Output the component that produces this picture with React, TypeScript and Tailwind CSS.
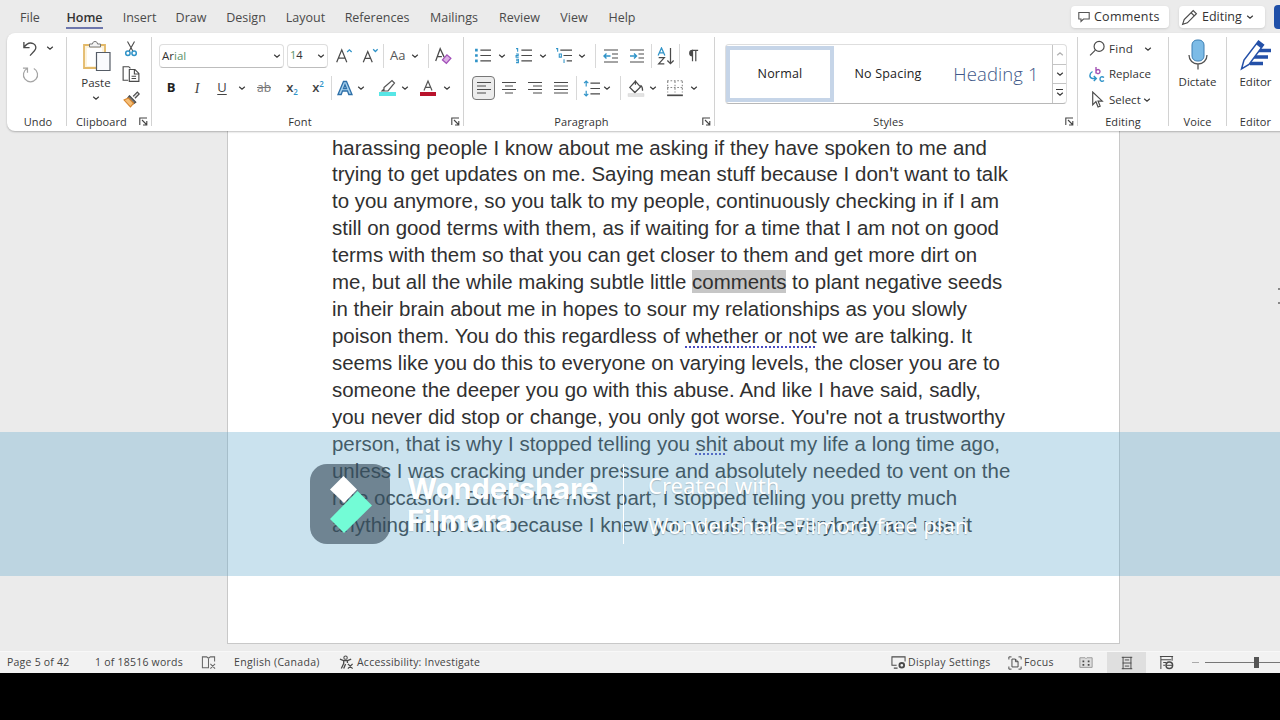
import type { ReactNode } from 'react';
import clsx from 'clsx';

/**
 * Word processor window: tab strip, ribbon, document page, status bar
 * and the video editor watermark that lies over the page.
 */

const tabs = [
    { name: 'File', width: 'w-[20px] mr-[6px]' },
    { name: 'Home', width: 'w-[37px]', active: true },
    { name: 'Insert', width: 'w-[33px]' },
    { name: 'Draw', width: 'w-[30px]' },
    { name: 'Design', width: 'w-[40px]' },
    { name: 'Layout', width: 'w-[39px]' },
    { name: 'References', width: 'w-[64px]' },
    { name: 'Mailings', width: 'w-[50px]' },
    { name: 'Review', width: 'w-[41px]' },
    { name: 'View', width: 'w-[28px]' },
    { name: 'Help', width: 'w-[28px]' },
];

const Spell = ({ children }: { children: string }) => (
    <span className="underline decoration-dotted decoration-[#4a4ac0] decoration-[2px] underline-offset-[3px]">{children}</span>
);

// One entry per line of the page, with the width the line takes
const lines: { width: string; text: ReactNode }[] = [
    { width: 'w-[655px]', text: 'harassing people I know about me asking if they have spoken to me and' },
    { width: 'w-[676px]', text: "trying to get updates on me. Saying mean stuff because I don't want to talk" },
    { width: 'w-[667px]', text: 'to you anymore, so you talk to my people, continuously checking in if I am' },
    { width: 'w-[667px]', text: 'still on good terms with them, as if waiting for a time that I am not on good' },
    { width: 'w-[645px]', text: 'terms with them so that you can get closer to them and get more dirt on' },
    { width: 'w-[670px]', text: <>me, but all the while making subtle little <span className="bg-[#c6c6c6]">comments</span> to plant negative seeds</> },
    { width: 'w-[635px]', text: 'in their brain about me in hopes to sour my relationships as you slowly' },
    { width: 'w-[640px]', text: <>poison them. You do this regardless of <Spell>whether or not</Spell> we are talking. It</> },
    { width: 'w-[668px]', text: 'seems like you do this to everyone on varying levels, the closer you are to' },
    { width: 'w-[649px]', text: 'someone the deeper you go with this abuse. And like I have said, sadly,' },
    { width: 'w-[673px]', text: "you never did stop or change, you only got worse. You're not a trustworthy" },
    { width: 'w-[668px]', text: <>person, that is why I stopped telling you <Spell>shit</Spell> about my life a long time ago,</> },
    { width: 'w-[678px]', text: 'unless I was cracking under pressure and absolutely needed to vent on the' },
    { width: 'w-[625px]', text: 'rare occasion. But for the most part, I stopped telling you pretty much' },
    { width: 'w-[640px]', text: 'anything important because I knew you would tell everybody and use it' },
];

const Chevron = ({ className }: { className?: string }) => (
    <svg className={clsx('h-2 w-2 shrink-0', className)} viewBox="0 0 8 8" fill="none" stroke="#3a3a3a" strokeWidth="1.2">
        <path d="M1.2 2.8 4 5.2l2.8-2.4" />
    </svg>
);

const Launcher = () => (
    <svg className="mr-[3px] h-[9px] w-[9px] shrink-0" viewBox="0 0 9 9" fill="none" stroke="#444" strokeWidth="1.1">
        <path d="M.8 8V1H8M3 3l4.5 4.5M7.8 4v4H4" />
    </svg>
);

const Sep = ({ className }: { className?: string }) => (
    <div className={clsx('h-6 w-px shrink-0 bg-[#d8d8d8]', className)} />
);

const Divider = () => <div className="mt-1 h-[89px] w-px shrink-0 bg-[#d2d2d2]" />;

// Fixed width slot that centres one tool
const Cell = ({ className, children }: { className: string; children: ReactNode }) => (
    <div className={clsx('flex shrink-0 items-center justify-center', className)}>{children}</div>
);

interface GroupProps {
    label: string;
    width: string;
    launcher?: boolean;
    children: ReactNode;
}

const Group = ({ label, width, launcher, children }: GroupProps) => (
    <section className={clsx('flex h-full shrink-0 flex-col', width)}>
        <div className="h-[79px]">{children}</div>
        <div className="flex h-[18px] items-center">
            <span className={clsx('flex-1 text-center text-[11px] leading-none tracking-[0.1px] whitespace-nowrap', launcher && '-ml-[3px]')}>{label}</span>
            {launcher && <Launcher />}
        </div>
    </section>
);

const Svg = ({ children, className = 'h-4 w-4' }: { children: ReactNode; className?: string }) => (
    <svg className={clsx('shrink-0', className)} viewBox="0 0 16 16" fill="none" stroke="#4a4a4a" strokeWidth="1.1">
        {children}
    </svg>
);

const UndoGroup = () => (
    <Group label="Undo" width="w-[59px] pl-[3px]">
        <div className="flex h-[30px] items-center pl-[12px]">
            <svg className="h-[17px] w-[17px]" viewBox="0 0 18 18" fill="none" stroke="#4a4a4a" strokeWidth="1.4">
                <path d="M2 2v6h6M2.3 7.6C5 3.6 9 2.400 12.200 4c3 1.600 3.200 5 1 7.400L8.500 16.500" />
            </svg>
            <Chevron className="ml-[7px]" />
        </div>
        <div className="flex h-[22px] items-center pl-[12px]">
            <svg className="h-[17px] w-[17px]" viewBox="0 0 18 18" fill="none" stroke="#a4a4a4" strokeWidth="1.300">
                <path d="M12.500 2.600A7.500 7.500 0 1 1 5.500 2.600M1 2.200h4.800v5" />
            </svg>
        </div>
    </Group>
);

const ClipboardGroup = () => (
    <Group label="Clipboard" width="w-[84px]" launcher>
        <div className="flex">
            <div className="ml-[13px] flex w-[32px] flex-col items-center">
                <svg className="mt-[7px] ml-[2px] h-[32px] w-[28px]" viewBox="0 0 28 32" fill="none">
                    <path d="M1 5h21v23H1z" fill="#fdf3dc" stroke="#e3b968" strokeWidth="1.800" />
                    <path d="M4 8h15v18H4z" fill="#fff" />
                    <path d="M6.500 7V4h3C9.500 2.500 10.500 1.500 12 1.500S14.500 2.500 14.500 4h3v3z" fill="#f4f4f4" stroke="#777" />
                    <path d="M13.500 12.500h13.500v18H13.500z" fill="#fafbfd" stroke="#555c66" strokeWidth="1.200" />
                </svg>
                <span className="mt-[3px] text-[11.500px] leading-[15px]">Paste</span>
                <Chevron className="mt-[4px]" />
            </div>
            <div className="ml-[10px] flex flex-col items-center">
                <Svg className="mt-[7px] h-[17px] w-[16px]">
                    <path d="M4.500 1l5.300 9.500M11.500 1 6.200 10.500" />
                    <circle cx="4.900" cy="12.800" r="2.200" stroke="#2f93c8" strokeWidth="1.500" />
                    <circle cx="11.100" cy="12.800" r="2.200" stroke="#2f93c8" strokeWidth="1.500" />
                </Svg>
                <Svg className="mt-[8px] h-[18px] w-[18px]">
                    <path d="M5.500 13.500H1V1.500h5l1.500 1.500M6.500 4h5L15 7.500v7H6.500zM11 4v4h4M8.500 10h4M8.500 12h4" strokeWidth="1" />
                </Svg>
                <Svg className="mt-[8px] h-[17px] w-[17px]">
                    <path d="M9.500 5 13.500 1l1.800 1.800-4 4" fill="#ddd" />
                    <path d="M6 4.500l6 6-2 1.500-5.500-5.500z" fill="#777" />
                    <path d="M5 6.500 1 8.500l6 6.500 3-3.500z" fill="#f6bf77" stroke="#d8862f" />
                </Svg>
            </div>
        </div>
    </Group>
);

const FontGroup = () => (
    <Group label="Font" width="w-[311px]" launcher>
        <div className="h-[11px]" />
        <div className="flex h-[23px] items-center pl-[7px]">
            <div className="flex h-[24px] w-[125px] shrink-0 items-center justify-between rounded border border-[#dedede] border-b-[#bdbdbd] pr-[2px] pl-[2px] text-[11.500px]">
                <span>Ar<span className="text-[#5d9468]">ial</span></span>
                <Chevron />
            </div>
            <div className="ml-[3px] flex h-[24px] w-[41px] shrink-0 items-center justify-between rounded border border-[#dedede] border-b-[#bdbdbd] pr-[2px] pl-[2px] text-[11px]">
                <span><span className="text-[#5d9468]">1</span>4</span>
                <Chevron />
            </div>
            <Cell className="ml-[6px] w-[20px]">
                <Svg className="h-[18px] w-[18px]">
                    <path d="M1.500 13.500 6 2.500l4.500 11M3 9.800h6" />
                    <path d="M10.800 4.500l2-2 2 2" stroke="#2f93c8" />
                </Svg>
            </Cell>
            <Cell className="ml-[6px] w-[20px]">
                <Svg className="h-[18px] w-[18px]">
                    <path d="M2 13.500 6 4l4 9.500M3.400 10.200h5.200" />
                    <path d="M10.800 2l2 2 2-2" stroke="#2f93c8" />
                </Svg>
            </Cell>
            <Sep className="ml-[3px]" />
            <span className="ml-[6px] w-[17px] text-[13px] whitespace-nowrap text-[#555]">Aa</span>
            <Chevron className="ml-[4px]" />
            <Sep className="ml-[9px]" />
            <Svg className="ml-[5px] h-[18px] w-[18px]">
                <path d="M1.500 12.500 5.500 1.500 9 9M3 8.500h4" />
                <path d="M7.500 11.500 11.500 7l3.500 3-4 4.500z" fill="#dcb0e6" stroke="#a14fb8" />
            </Svg>
        </div>
        <div className="mt-[9px] flex h-[24px] items-center pl-[7px] text-[13px] text-[#444]">
            <Cell className="w-[24px] font-bold text-[#222]">B</Cell>
            <Cell className="w-[28px] font-['Liberation_Serif'] text-[14px] italic">I</Cell>
            <Cell className="w-[22px] underline underline-offset-2">U</Cell>
            <Cell className="w-[18px]"><Chevron /></Cell>
            <Cell className="w-[26px] text-[12px] text-[#777] line-through">ab</Cell>
            <Cell className="w-[30px] font-semibold">x<span className="mt-[7px] text-[8px] text-[#2f93c8]">2</span></Cell>
            <Cell className="w-[22px] font-semibold">x<span className="mb-[8px] text-[8px] text-[#2f93c8]">2</span></Cell>
            <Cell className="w-[4px]"><Sep /></Cell>
            <Cell className="w-[24px]">
                <Svg className="h-[16px] w-[16px]">
                    <path d="M1 14.500 6.500 1.500h3L15 14.500h-3.200l-1.300-3.500h-5L4.200 14.500zM6.500 8.500h3L8 4.800z" fill="#a9d2ee" stroke="#2d6fa8" strokeWidth="1.300" />
                </Svg>
            </Cell>
            <Cell className="w-[8px]"><Chevron /></Cell>
            <Cell className="ml-[10px] w-[26px]">
                <svg className="h-[18px] w-[18px]" viewBox="0 0 18 18" fill="none" stroke="#555" strokeWidth="1.200">
                    <path d="M5 8.500 13 1.500l2.500 2.500L9 12H5zM5 10 3 12h4" />
                    <path d="M0 13h17v4H0z" fill="#57e6e6" stroke="none" />
                </svg>
            </Cell>
            <Cell className="w-[8px]"><Chevron /></Cell>
            <Cell className="ml-[5px] w-[28px]">
                <svg className="h-[18px] w-[18px]" viewBox="0 0 18 18" fill="none" stroke="#555" strokeWidth="1.200">
                    <path d="M5 11.500 9 2l4 9.500M6.400 8.300h5.200" />
                    <path d="M1 13h16v4H1z" fill="#b9132c" stroke="none" />
                </svg>
            </Cell>
            <Cell className="w-[10px]"><Chevron /></Cell>
        </div>
    </Group>
);

const AlignIcon = ({ d }: { d: string }) => (
    <Svg>
        <path d={d} strokeWidth="1.200" />
    </Svg>
);

const ParagraphGroup = () => (
    <Group label="Paragraph" width="w-[250px]" launcher>
        <div className="h-[11px]" />
        <div className="flex h-[23px] items-center pl-[10px]">
            <Svg className="h-[17px] w-[17px]">
                <path d="M6 3h10M6 8h10M6 13h10" />
                <path d="M1 3h2.500M1 8h2.500M1 13h2.500" stroke="#2f93c8" strokeWidth="2.500" />
            </Svg>
            <Chevron className="ml-[7px]" />
            <Svg className="ml-[9px] h-[17px] w-[17px]">
                <path d="M6 3h10M6 8h10M6 13h10" />
                <path d="M1 1.500h1.500v3M1 6.500h2v1.500H1v1.500h2.500M1 11.500h2.200v3.200H1M1 13h2" stroke="#2f93c8" strokeWidth="1" />
            </Svg>
            <Chevron className="ml-[7px]" />
            <Svg className="ml-[8px] h-[17px] w-[17px]">
                <path d="M5 3h11M8 8h8M11 13h5" />
                <path d="M1 1.500h1.500v3M4 6.500h2V9.500H4zM8.500 11.500v3.500" stroke="#2f93c8" strokeWidth="1" />
            </Svg>
            <Chevron className="ml-[6px]" />
            <Sep className="ml-[9px]" />
            <Svg className="ml-[7px] h-4 w-4">
                <path d="M1 2h14M9 6h6M9 10h6M1 14h14" />
                <path d="M7.500 8H1M3.500 5.500 1 8l2.500 2.500" stroke="#2f93c8" strokeWidth="1.400" />
            </Svg>
            <Svg className="ml-[10px] h-4 w-4">
                <path d="M1 2h14M9.500 6H15M9.500 10H15M1 14h14" />
                <path d="M1 8h6.500M5 5.500 7.500 8 5 10.500" stroke="#2f93c8" strokeWidth="1.400" />
            </Svg>
            <Sep className="ml-[6px]" />
            <Svg className="ml-[5px] h-[18px] w-[18px]">
                <path d="M1 7.500 4 .8l3 6.700M2 5.300h4" stroke="#2f93c8" />
                <path d="M1.500 9.500h5L1.500 15h5M12 .8v14M9.200 12 12 14.800l2.800-2.800" />
            </Svg>
            <Sep className="ml-[4px]" />
            <Svg className="ml-[5px] h-[15px] w-[15px]">
                <path d="M8 2.500a3 3 0 0 0 0 6z" fill="#4a4a4a" />
                <path d="M8 14V2.500h6M11.500 2.500V14" strokeWidth="1.300" />
            </Svg>
        </div>
        <div className="mt-[9px] flex h-[24px] items-center pl-[8px]">
            <div className="flex h-[24px] w-[23px] shrink-0 items-center justify-center rounded-[4px] border border-[#777] bg-[#ececec]">
                <AlignIcon d="M1 2.500h14M1 6h9M1 9.500h14M1 13h9" />
            </div>
            <Cell className="w-[28px]"><AlignIcon d="M1 2.500h14M4 6h8M1 9.500h14M4 13h8" /></Cell>
            <Cell className="w-[24px]"><AlignIcon d="M1 2.500h14M6 6h9M1 9.500h14M6 13h9" /></Cell>
            <Cell className="w-[28px]"><AlignIcon d="M1 2.500h14M1 6h14M1 9.500h14M1 13h14" /></Cell>
            <Sep className="ml-px" />
            <Svg className="ml-[6px] h-[17px] w-[17px]">
                <path d="M7 3h9M7 8h9M7 13h9" />
                <path d="M3 1v5M1 3l2-2 2 2M3 10v5M1 13l2 2 2-2" stroke="#2f93c8" />
            </Svg>
            <Chevron className="ml-[3px]" />
            <Sep className="ml-[9px]" />
            <Svg className="ml-[6px] h-[18px] w-[18px]">
                <path d="M7.500 2 2.500 7.500 7 12l5-5zM7.500 1v4M12 5.500c1.500 1 2 2.500 1.800 5" />
                <path d="M1 13h14v2.500H1z" fill="#e3e3e3" stroke="#d2d2d2" strokeWidth=".5" />
            </Svg>
            <Chevron className="ml-[4px]" />
            <Svg className="ml-[9px] h-[18px] w-[18px]">
                <path d="M1 1.500h14M1.500 2v10M14.500 2v10M8 2v10M1 7.500h14" stroke="#888" strokeDasharray="1.500 1.500" strokeWidth="1" />
                <path d="M1 14.500h14" strokeWidth="1.500" />
            </Svg>
            <Chevron className="ml-[6px]" />
        </div>
    </Group>
);

const StylesGroup = () => (
    <Group label="Styles" width="w-[362px]" launcher>
        <div className="h-[11px]" />
        <div className="ml-[10px] flex h-[60px] w-[342px] rounded border border-[#dedede] border-b-[#b8b8b8]">
            <div className="mt-px flex h-[56px] w-[108px] shrink-0 items-center justify-center border-4 border-[#c6d5e8] text-[12.500px] tracking-[0.200px] text-[#222]">Normal</div>
            <div className="flex w-[108px] shrink-0 items-center justify-center text-[12.500px] tracking-[0.200px] whitespace-nowrap text-[#222]">No Spacing</div>
            <div className="flex w-[110px] shrink-0 items-center justify-center pr-[2px] text-[18.500px] font-light tracking-[0.100px] whitespace-nowrap text-[#41598a]">Heading 1</div>
            <div className="flex flex-1 flex-col divide-y divide-[#c4c4c4] border-l border-[#c4c4c4]">
                <div className="flex flex-1 items-center justify-center"><Chevron className="rotate-180 opacity-40" /></div>
                <div className="flex flex-1 items-center justify-center"><Chevron /></div>
                <div className="flex flex-1 flex-col items-center justify-center">
                    <div className="h-px w-[7px] bg-[#3a3a3a]" />
                    <Chevron />
                </div>
            </div>
        </div>
    </Group>
);

const EditingGroup = () => (
    <Group label="Editing" width="w-[90px]">
        <div className="flex flex-col pt-[3px] pl-[11px] text-[11.500px] text-[#333]">
            <div className="flex h-[25px] items-center">
                <Svg className="h-[17px] w-[17px]">
                    <circle cx="9.500" cy="6" r="4.700" />
                    <path d="M6 9.500 1 14.500" />
                </Svg>
                <span className="ml-[3px] w-[35px] tracking-[0.300px]">Find</span>
                <Chevron />
            </div>
            <div className="flex h-[26px] items-center">
                <svg className="h-[17px] w-[17px]" viewBox="0 0 17 17" fill="none" strokeWidth="1.400">
                    <path d="M7 1v6.500M7 5.500a2 2 0 1 1 0 .2" stroke="#a453b5" />
                    <path d="M15 11.500c-2-1.600-4-.5-4 1.500s2 3 4 1.500M3.500 5.500C0 7.500 0 12 3.500 12.500H7M4.800 10 7.300 12.500 4.800 15" stroke="#2f93c8" />
                </svg>
                <span className="ml-[3px]">Replace</span>
            </div>
            <div className="flex h-[25px] items-center">
                <Svg className="h-[17px] w-[17px]">
                    <path d="M3.500 1v12l3-3 2 5 2-.8-2-4.700h4z" />
                </Svg>
                <span className="ml-[3px] w-[34px]">Select</span>
                <Chevron />
            </div>
        </div>
    </Group>
);

const VoiceGroup = () => (
    <Group label="Voice" width="w-[57px]">
        <div className="flex flex-col items-center pt-[6px]">
            <svg className="h-[32px] w-[22px]" viewBox="0 0 22 32" fill="none">
                <rect x="5" y="1" width="12" height="21" rx="5" fill="#7cbbe6" stroke="#3c7fb4" />
                <path d="M2 16c0 5.500 4 9 9 9s9-3.500 9-9M11 25v5.500" stroke="#555" strokeWidth="1.300" />
            </svg>
            <span className="mt-[3px] text-[11.500px] leading-[15px]">Dictate</span>
        </div>
    </Group>
);

const EditorGroup = () => (
    <Group label="Editor" width="w-[57px]">
        <div className="flex flex-col items-center pt-[6px]">
            <svg className="h-[32px] w-[32px]" viewBox="0 0 32 32" fill="none">
                <path d="M17 11.500h14M14 18h14M10 24.500h13" stroke="#2450a8" strokeWidth="3.500" />
                <path d="M1.500 30 4 21 18.500 2l5 4L9 25.500z" fill="#fff" stroke="#2450a8" strokeWidth="1.500" />
                <path d="M16 5.300 18.500 2l5 4-2.500 3.300z" fill="#2450a8" />
            </svg>
            <span className="mt-[3px] text-[11.500px] leading-[15px]">Editor</span>
        </div>
    </Group>
);

const TabStrip = () => (
    <header className="flex h-[33px] shrink-0 items-start">
        <nav className="flex w-[1071px] shrink-0 gap-[20px] pt-[9px] pl-[20px] text-[12.500px] text-[#4a4a4a]">
            {tabs.map((tab) => (
                <div key={tab.name} className={clsx('flex shrink-0 flex-col items-center whitespace-nowrap', tab.width)}>
                    <span className={clsx('leading-[18px]', tab.active && 'font-semibold text-[#333]')}>{tab.name}</span>
                    {tab.active && <div className="h-[2px] w-full bg-[#6d76ac]" />}
                </div>
            ))}
        </nav>
        <div className="mt-[6px] flex h-[22px] w-[98px] shrink-0 items-center rounded bg-white pl-[7px] text-[12.500px] font-medium tracking-[0.250px] text-[#333] shadow-sm">
            <svg className="mr-[4px] h-[12px] w-[12px]" viewBox="0 0 12 12" fill="none" stroke="#555" strokeWidth="1.100">
                <path d="M.8 1.500h10.400v6.500H5.500L3 10.500V8H.8z" />
            </svg>
            Comments
        </div>
        <div className="mt-[6px] ml-[10px] flex h-[22px] w-[86px] shrink-0 items-center rounded bg-white pl-[2px] text-[12.500px] font-medium text-[#333] shadow-sm">
            <Svg className="mr-[4px] h-[17px] w-[17px]">
                <path d="M1.500 14.500 3 10 11.500 1.500l3 3L6 13zM9.500 3.500l3 3" />
            </Svg>
            Editing
            <Chevron className="ml-[4px]" />
        </div>
        <div className="mt-[5px] ml-[9px] h-[24px] w-[20px] shrink-0 rounded bg-[#1f4fa8]" />
    </header>
);

const Ribbon = () => (
    <div className="relative z-10 ml-[7px] flex h-[98px] w-[1300px] shrink-0 rounded-lg bg-white text-[#333] shadow-[0_1px_2px_rgba(0,0,0,0.25)]">
        <UndoGroup />
        <Divider />
        <ClipboardGroup />
        <Divider />
        <FontGroup />
        <Divider />
        <ParagraphGroup />
        <Divider />
        <StylesGroup />
        <Divider />
        <EditingGroup />
        <Divider />
        <VoiceGroup />
        <Divider />
        <EditorGroup />
    </div>
);

const DocumentArea = () => (
    <main className="flex h-[520px] shrink-0 justify-between">
        <article className="ml-[227px] h-[513px] w-[893px] shrink-0 border border-t-0 border-[#c8c8c8] bg-white pt-[3.500px] pl-[104px] font-['Liberation_Sans',sans-serif] text-[20.450px] leading-[26.950px] text-[#303030]">
            {lines.map((line, i) => (
                <p key={i} className={clsx('whitespace-nowrap [text-align-last:justify]', line.width)}>{line.text}</p>
            ))}
        </article>
        {/* edge of the text cursor, half out of the window */}
        <div className="mt-[157px] h-[16px] w-[2px] border-y-2 border-[#888]" />
    </main>
);

const StatusBar = () => (
    <footer className="flex h-[22px] shrink-0 items-center border-t border-[#f8f8f8] bg-[#f2f2f2] pl-[7px] text-[10.500px] tracking-[0.230px] whitespace-nowrap text-[#444]">
        <span className="w-[88px] shrink-0">Page 5 of 42</span>
        <span className="w-[106px] shrink-0">1 of 18516 words</span>
        <Svg className="h-[15px] w-[15px]">
            <path d="M8 3v10.500H1.500V2H6l2 1.500L10 2h4.500v5M10 9.500l5 5M15 9.500l-5 5" stroke="#666" />
        </Svg>
        <span className="ml-[18px] w-[105px] shrink-0 tracking-[0.320px]">English (Canada)</span>
        <Svg className="h-[15px] w-[15px]">
            <circle cx="7" cy="2.800" r="1.800" />
            <path d="M1 4.500 5 6v3l-2.500 5.500M13 4.500 9 6v2.500M5 6h4M7 9.500l-2 5M9.500 9.500l5 5M14.500 9.500l-5 5" strokeWidth="1.400" />
        </Svg>
        <span className="ml-[3px] w-[534px] shrink-0">Accessibility: Investigate</span>
        <Svg className="h-[15px] w-[15px]">
            <path d="M6 11H1V2h14v5M3 14h4" />
            <circle cx="11.500" cy="11" r="2.500" strokeWidth="2" />
        </Svg>
        <span className="ml-[2px] w-[100px] shrink-0 tracking-[0.350px]">Display Settings</span>
        <Svg className="h-[14px] w-[14px]">
            <path d="M1 4V1h3M12 1h3v3M1 12v3h3M15 12v3h-3M4.500 3.500h4l3 3v6h-7zM8.500 3.500v3h3" />
        </Svg>
        <span className="ml-[2px] w-[55px] shrink-0 tracking-[0.350px]">Focus</span>
        <Svg className="h-[14px] w-[14px]">
            <path d="M1 2h6l1 1 1-1h6v11H1z" fill="#ddd" stroke="#999" />
            <path d="M4 6h2M10 6h2M4 10h2M10 10h2" strokeWidth="2" />
        </Svg>
        <div className="ml-[14px] flex h-full w-[39px] shrink-0 items-center justify-center bg-[#dfdfdf]">
            <Svg className="h-[14px] w-[14px]">
                <path d="M2 1.500h12M3.500 1v14M12.500 1v14M3 8h10M2 14.500h12M5.500 4.500h5M5.500 11.500h5" />
            </Svg>
        </div>
        <Svg className="ml-[13px] h-[15px] w-[15px]">
            <path d="M1 1.500h14M2 1v14M14 1v5M2 5h11M4.500 8h3M4.500 11h2" />
            <circle cx="11" cy="11" r="3.500" strokeWidth="1.600" />
            <path d="M8 11h6" />
        </Svg>
        <div className="ml-[18px] h-px w-[7px] shrink-0 bg-[#aaa]" />
        <div className="ml-[6px] flex w-[80px] shrink-0 items-center">
            <div className="h-px w-[49px] bg-[#777]" />
            <div className="h-[11px] w-[5px] bg-[#555]" />
            <div className="h-px flex-1 bg-[#777]" />
        </div>
    </footer>
);

const Watermark = () => (
    <div className="absolute top-[432px] left-0 z-20 flex h-[144px] w-full bg-[rgba(103,172,206,0.35)] pt-[32px] pl-[310px] text-white">
        <div className="h-[80px] w-[80px] shrink-0 rounded-[17px] bg-[rgba(50,70,85,0.600)]">
            <svg className="h-full w-full" viewBox="0 0 80 80">
                <path d="M33.500 12 47 25.500 34 39 20 25.500z" fill="#fff" />
                <path d="M47.500 27 62 41.500 34 69 20 55z" fill="#73fcd6" />
            </svg>
        </div>
        <div className="ml-[17px] w-[216px] shrink-0 pt-[9px] font-['Inter',sans-serif] text-[29px] leading-[31.500px] font-bold [text-shadow:0_1px_1px_rgba(0,0,0,0.12)]">
            <p>Wondershare</p>
            <p>Filmora</p>
        </div>
        <div className="h-[80px] w-px shrink-0 bg-white" />
        <div className="ml-[24px] pt-[1px] font-['Noto_Sans',sans-serif] text-[22px] leading-[40px] whitespace-nowrap [text-shadow:0_1px_1px_rgba(0,0,0,0.200)]">
            <p>Created with</p>
            <p>Wondershare Filmora free plan</p>
        </div>
    </div>
);

export default function App() {
    return (
        <div className="relative flex h-[720px] w-[1280px] flex-col overflow-hidden bg-black font-['Open_Sans',sans-serif]">
            <div className="flex h-[673px] shrink-0 flex-col bg-[#ebebeb]">
                <TabStrip />
                <Ribbon />
                <DocumentArea />
                <StatusBar />
            </div>
            <Watermark />
        </div>
    );
}
